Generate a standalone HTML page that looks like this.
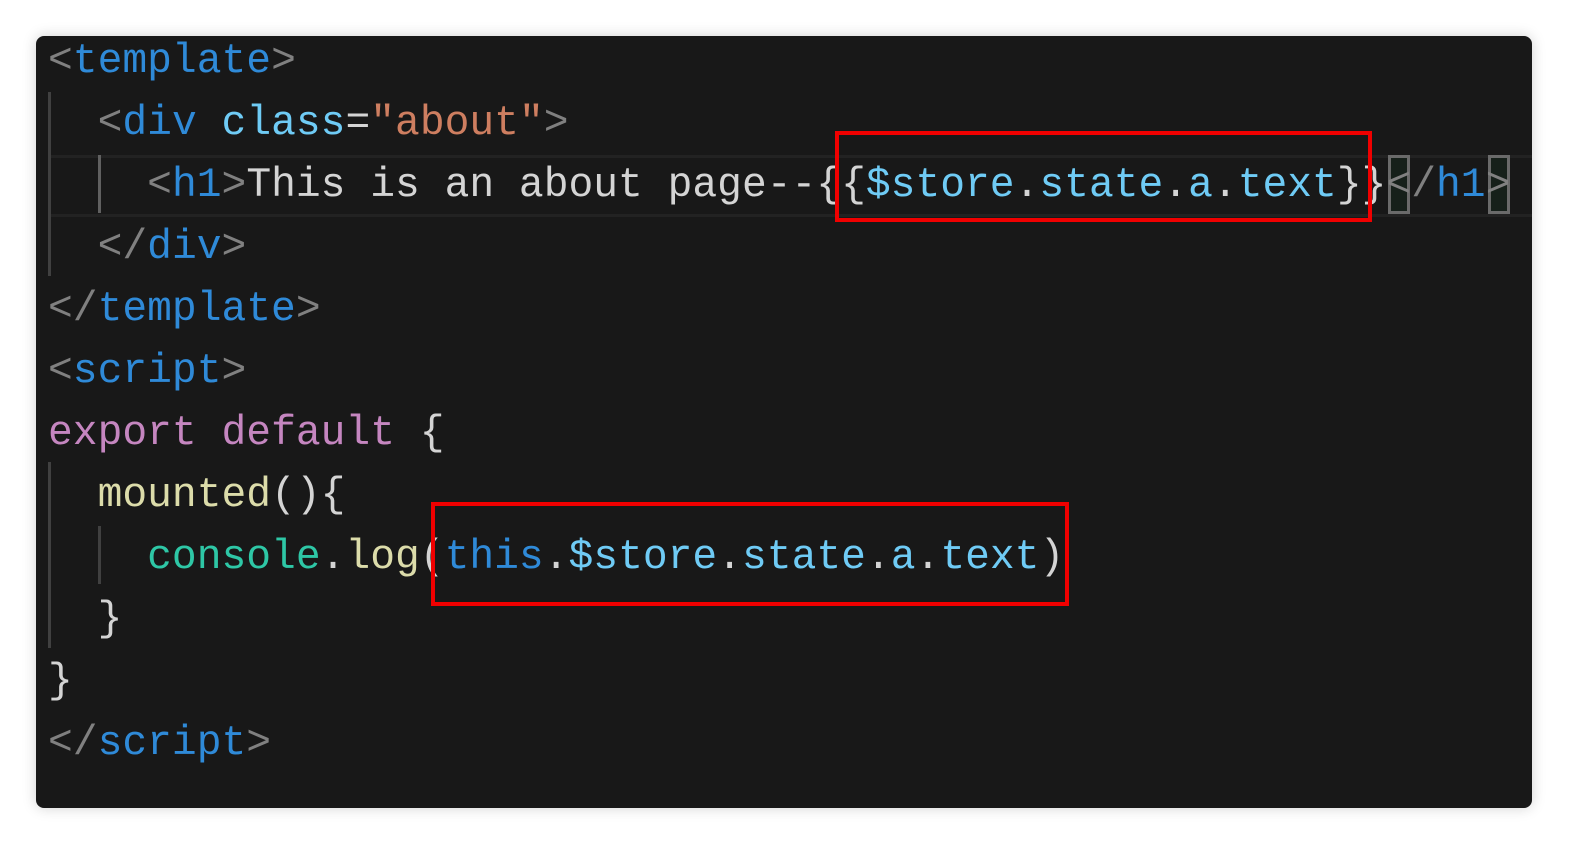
<!DOCTYPE html>
<html><head><style>
html,body{margin:0;padding:0;background:#fff;width:1578px;height:850px;overflow:hidden}
.win{position:absolute;left:36px;top:36px;width:1496px;height:772px;background:#181818;border-radius:8px;box-shadow:0 0 14px rgba(0,0,0,.18);overflow:hidden}
.ln{position:absolute;left:12px;height:62px;line-height:62px;font-family:"Liberation Mono",monospace;font-size:41.3px;white-space:pre;color:#d4d4d4}
.p{color:#808080}.t{color:#2f8ad8}.a{color:#6fcbf5}.s{color:#ce7e60}.k{color:#c586c0}.f{color:#dcdcaa}.c{color:#2ec7a6}
.g{position:absolute;width:3px;background:#404040}
.hl{position:absolute;left:12px;right:0;top:119px;height:56px;border-top:3px solid #222;border-bottom:3px solid #222}
.rb{position:absolute;border:4px solid #f00000}
.bm{position:absolute;border:3px solid #6a6a6a;background:#16201a}
</style></head><body>
<div class="win">
<div class="hl"></div>
<div class="g" style="left:12px;top:56px;height:184px"></div>
<div class="g" style="left:62px;top:119px;height:58px;background:#606060"></div>
<div class="g" style="left:12px;top:426px;height:186px"></div>
<div class="g" style="left:62px;top:490px;height:58px"></div>
<div class="bm" style="left:1352px;top:119px;width:16px;height:53px"></div>
<div class="bm" style="left:1452px;top:119px;width:16px;height:53px"></div>
<div class="ln" style="top:-5px"><span class="p">&lt;</span><span class="t">template</span><span class="p">&gt;</span></div>
<div class="ln" style="top:57px">  <span class="p">&lt;</span><span class="t">div</span> <span class="a">class</span>=<span class="s">"about"</span><span class="p">&gt;</span></div>
<div class="ln" style="top:119px">    <span class="p">&lt;</span><span class="t">h1</span><span class="p">&gt;</span>This is an about page--{{<span class="a">$store</span>.<span class="a">state</span>.<span class="a">a</span>.<span class="a">text</span>}}<span class="p">&lt;/</span><span class="t">h1</span><span class="p">&gt;</span></div>
<div class="ln" style="top:181px">  <span class="p">&lt;/</span><span class="t">div</span><span class="p">&gt;</span></div>
<div class="ln" style="top:243px"><span class="p">&lt;/</span><span class="t">template</span><span class="p">&gt;</span></div>
<div class="ln" style="top:305px"><span class="p">&lt;</span><span class="t">script</span><span class="p">&gt;</span></div>
<div class="ln" style="top:367px"><span class="k">export</span> <span class="k">default</span> {</div>
<div class="ln" style="top:429px">  <span class="f">mounted</span>(){</div>
<div class="ln" style="top:491px">    <span class="c">console</span>.<span class="f">log</span>(<span class="t">this</span>.<span class="a">$store</span>.<span class="a">state</span>.<span class="a">a</span>.<span class="a">text</span>)</div>
<div class="ln" style="top:553px">  }</div>
<div class="ln" style="top:615px">}</div>
<div class="ln" style="top:677px"><span class="p">&lt;/</span><span class="t">script</span><span class="p">&gt;</span></div>
<div class="rb" style="left:799px;top:95px;width:529px;height:83px"></div>
<div class="rb" style="left:395px;top:466px;width:630px;height:96px"></div>
</div>
</body></html>
